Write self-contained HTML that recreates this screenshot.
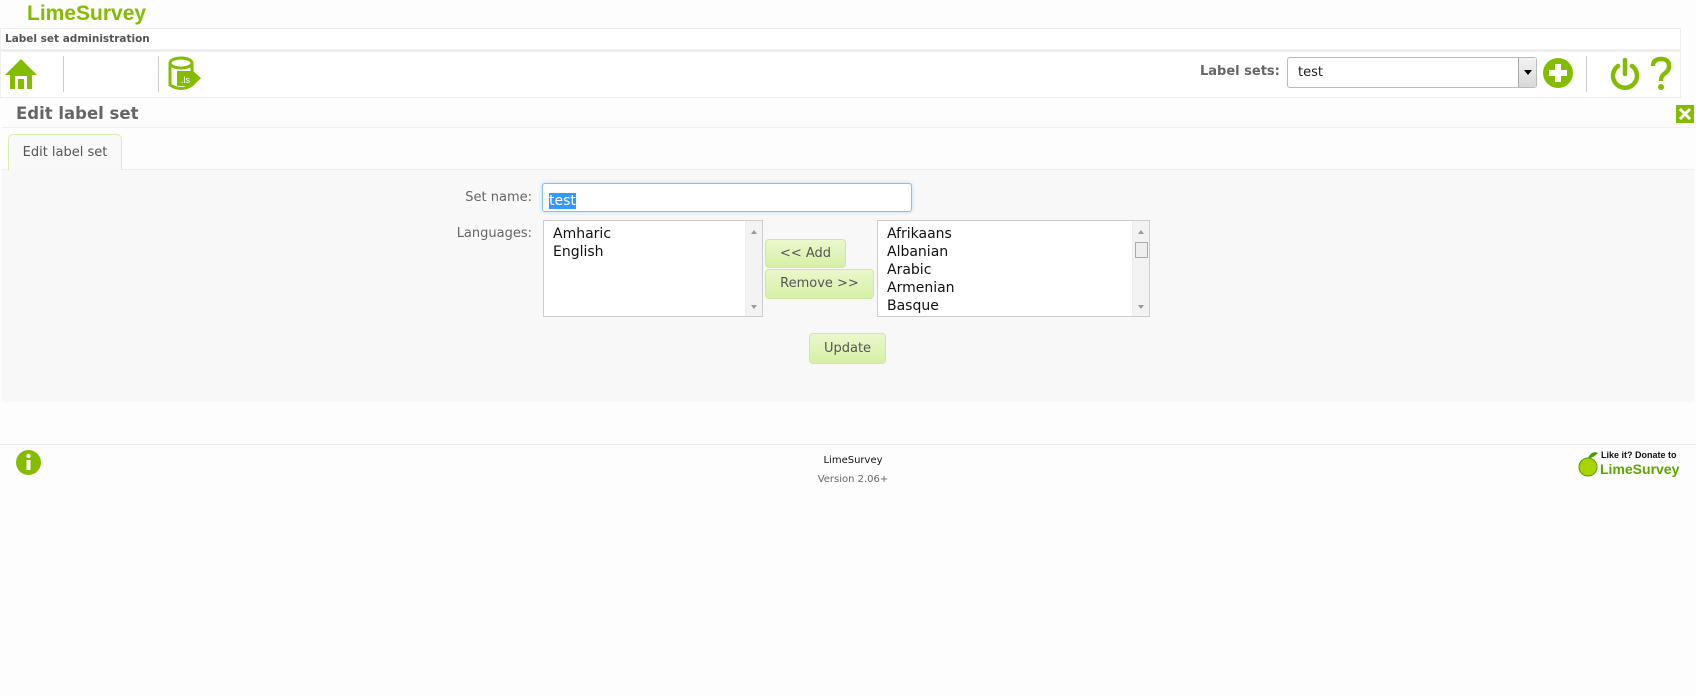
<!DOCTYPE html>
<html><head><meta charset="utf-8"><style>
*{box-sizing:border-box;margin:0;padding:0}
body{width:1696px;height:697px;background:#fdfdfd;font-family:"DejaVu Sans","Liberation Sans",sans-serif;color:#555;position:relative;overflow:hidden}
.a{position:absolute}
.logo{left:27px;top:2px;font:bold 21px "Liberation Sans",sans-serif;color:#84bc00}
.bar1{left:0;top:28px;width:1681px;height:22px;border:1px solid #eee;background:#fff;font:bold 10.5px "DejaVu Sans",sans-serif;color:#555;padding:4px 4px}
.bar2{left:0;top:50px;width:1681px;height:48px;border:1px solid #eee;border-top:2px solid #eee;background:#fff}
.sep{width:1px;height:36px;background:#ccc;top:56px}
.lbl{font:bold 13px "DejaVu Sans",sans-serif;color:#666}
.sel{left:1287px;top:57px;width:250px;height:31px;border:1px solid #bbb;border-radius:3px;background:#fff;font:13px "DejaVu Sans",sans-serif;color:#222;padding:7px 10px}
.sel .dd{position:absolute;right:0;top:0;width:18px;height:29px;background:linear-gradient(#f4f4f4,#d8d8d8);border-left:1px solid #aaa}
.sel .dd:after{content:"";position:absolute;left:5px;top:12px;border:4px solid transparent;border-top:5px solid #000}
h2{left:16px;top:104px;font:bold 16.5px "DejaVu Sans",sans-serif;color:#666}
.tab{left:8px;top:134px;width:114px;height:36px;border:1px solid #d8eeb0;border-bottom:none;border-radius:5px 5px 0 0;background:#f9f9f9;font:13px "DejaVu Sans",sans-serif;color:#555;text-align:center;padding-top:10px}
.panel{left:2px;top:169px;width:1692px;height:233px;background:#f8f8f8;border-top:1px solid #eee}
.f{font:13px "DejaVu Sans",sans-serif;color:#666}
.inp{left:542px;top:183px;width:370px;height:29px;border:1px solid #8cc0ec;border-radius:3px;background:#fff;box-shadow:0 0 4px #b9dbf5;padding:6px 6px}
.inp span{background:#3399ff;color:#fff;font:14px "DejaVu Sans",sans-serif}
.lst{height:97px;border:1px solid #ccc;background:#fff;font:14px "DejaVu Sans",sans-serif;color:#111;line-height:18px;padding:4px 9px}
.sb{position:absolute;right:0;top:0;width:17px;height:95px;background:#f3f3f3;border-left:1px solid #eee}
.sb:before{content:"";position:absolute;left:5px;top:6px;border:3px solid transparent;border-bottom:4px solid #999}
.sb:after{content:"";position:absolute;left:5px;bottom:4px;border:3px solid transparent;border-top:4px solid #999}
.btn{background:linear-gradient(#eaf8cc,#d6f0a6);border:1px solid #cde8a0;border-radius:4px;font:13px "DejaVu Sans",sans-serif;color:#555;text-align:center;padding-top:6px}
.foot{left:0;top:444px;width:1696px;height:1px;background:#eee}
</style></head><body>
<div class="a logo">LimeSurvey</div>
<div class="a bar1">Label set administration</div>
<div class="a bar2"></div>
<svg class="a" style="left:4px;top:57px" width="34" height="34" viewBox="0 0 34 34"><path d="M17 2 L33 18 L28 18 L28 32 L6 32 L6 18 L1 18 Z" fill="#84bc00"/><rect x="11" y="19" width="12" height="13" fill="#fff"/><rect x="14" y="22" width="6" height="10" fill="#84bc00"/></svg>
<div class="a sep" style="left:63px"></div>
<div class="a sep" style="left:158px"></div>
<svg class="a" style="left:167px;top:56px" width="36" height="36" viewBox="0 0 36 36"><ellipse cx="14" cy="7" rx="11" ry="5" fill="none" stroke="#84bc00" stroke-width="3"/><path d="M3 7 V29 Q14 36 25 29 V7" fill="none" stroke="#84bc00" stroke-width="3"/><path d="M10 15 H26 L34 22 L26 30 H10 Z" fill="#84bc00"/><text x="14" y="27" font-size="9" fill="#fff" font-family="Liberation Sans">.ls</text></svg>
<div class="a lbl" style="left:1200px;top:64px">Label sets:</div>
<div class="a sel">test<div class="dd"></div></div>
<svg class="a" style="left:1543px;top:58px" width="30" height="30"><circle cx="15" cy="15" r="15" fill="#84bc00"/><rect x="12" y="6" width="6" height="18" fill="#fff"/><rect x="6" y="12" width="18" height="6" fill="#fff"/></svg>
<div class="a sep" style="left:1586px"></div>
<svg class="a" style="left:1609px;top:57px" width="32" height="34" viewBox="0 0 32 34"><path d="M9 9 A12 12 0 1 0 23 9" fill="none" stroke="#84bc00" stroke-width="4.5" stroke-linecap="round"/><line x1="16" y1="3" x2="16" y2="17" stroke="#84bc00" stroke-width="4.5" stroke-linecap="round"/></svg>
<svg class="a" style="left:1650px;top:56px" width="22" height="36" viewBox="0 0 22 36"><path d="M3 10 Q3 3 11 3 Q19 3 19 10 Q19 15 14 18 Q11 20 11 25" fill="none" stroke="#84bc00" stroke-width="4.5"/><circle cx="11" cy="31" r="3" fill="#84bc00"/></svg>
<h2 class="a">Edit label set</h2>
<svg class="a" style="left:1676px;top:105px" width="18" height="18"><rect width="18" height="18" fill="#84bc00"/><path d="M4 4 L14 14 M14 4 L4 14" stroke="#fff" stroke-width="3"/></svg>
<div class="a" style="left:2px;top:127px;width:1692px;height:1px;background:#f0f0f0"></div>
<div class="a panel"></div>
<div class="a tab">Edit label set</div>
<div class="a f" style="left:462px;top:190px;width:70px;text-align:right">Set name:</div>
<div class="a inp"><span>test</span></div>
<div class="a f" style="left:440px;top:226px;width:92px;text-align:right">Languages:</div>
<div class="a lst" style="left:543px;top:220px;width:220px">Amharic<br>English<div class="sb"></div></div>
<div class="a btn" style="left:765px;top:239px;width:81px;height:29px">&lt;&lt; Add</div>
<div class="a btn" style="left:765px;top:269px;width:109px;height:30px">Remove &gt;&gt;</div>
<div class="a lst" style="left:877px;top:220px;width:273px">Afrikaans<br>Albanian<br>Arabic<br>Armenian<br>Basque<div class="sb"><div style="position:absolute;left:2px;top:21px;width:13px;height:16px;border:1px solid #aaa;background:#eee"></div></div></div>
<div class="a btn" style="left:809px;top:333px;width:77px;height:31px;padding-top:7px">Update</div>
<div class="a foot"></div>
<svg class="a" style="left:16px;top:450px" width="25" height="25"><circle cx="12.5" cy="12.5" r="12.5" fill="#84bc00"/><circle cx="12.5" cy="6" r="2.2" fill="#fff"/><rect x="10.5" y="10" width="4" height="10" fill="#fff"/></svg>
<div class="a" style="left:803px;top:455px;width:100px;text-align:center;font:10px 'DejaVu Sans',sans-serif;color:#111">LimeSurvey</div>
<div class="a" style="left:793px;top:474px;width:120px;text-align:center;font:10px 'DejaVu Sans',sans-serif;color:#666">Version 2.06+</div>
<svg class="a" style="left:1578px;top:448px" width="104" height="30"><path d="M10 10 Q14 2 20 5 Q16 9 12 10Z" fill="#4a9a00"/><circle cx="10" cy="19" r="9" fill="#a8d400" stroke="#5b9a00"/><text x="23" y="10" font-size="9" font-weight="bold" font-family="Liberation Sans" fill="#111">Like it? Donate to</text><text x="22" y="26" font-size="14" font-weight="bold" font-family="Liberation Sans" fill="#5ea400">LimeSurvey</text></svg>
</body></html>
